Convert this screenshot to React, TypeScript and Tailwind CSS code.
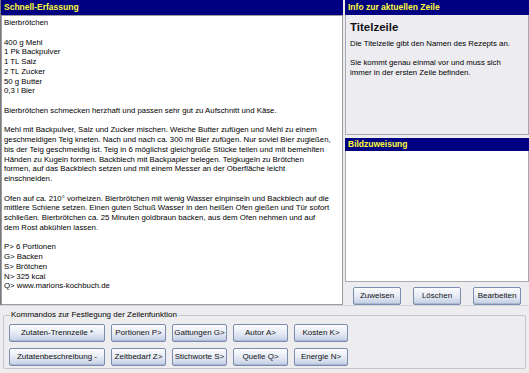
import React from "react";

const recipe = [
  "Bierbrötchen",
  "",
  "400 g Mehl",
  "1 Pk Backpulver",
  "1 TL Salz",
  "2 TL Zucker",
  "50 g Butter",
  "0,3 l Bier",
  "",
  "Bierbrötchen schmecken herzhaft und passen sehr gut zu Aufschnitt und Käse.",
  "",
  "Mehl mit Backpulver, Salz und Zucker mischen. Weiche Butter zufügen und Mehl zu einem",
  "geschmeidigen Teig kneten. Nach und nach ca. 300 ml Bier zufügen. Nur soviel Bier zugießen,",
  "bis der Teig geschmeidig ist. Teig in 6 möglichst gleichgroße Stücke teilen und mit bemehlten",
  "Händen zu Kugeln formen. Backblech mit Backpapier belegen. Teigkugeln zu Brötchen",
  "formen, auf das Backblech setzen und mit einem Messer an der Oberfläche leicht",
  "einschneiden.",
  "",
  "Ofen auf ca. 210° vorheizen. Bierbrötchen mit wenig Wasser einpinseln und Backblech auf die",
  "mittlere Schiene setzen. Einen guten Schuß Wasser in den heißen Ofen gießen und Tür sofort",
  "schließen. Bierbrötchen ca. 25 Minuten goldbraun backen, aus dem Ofen nehmen und auf",
  "dem Rost abkühlen lassen.",
  "",
  "P> 6 Portionen",
  "G> Backen",
  "S> Brötchen",
  "N> 325 kcal",
  "Q> www.marions-kochbuch.de",
];

function XpButton({ label, w }: { label: string; w: string }) {
  return (
    <button
      className={`${w} h-[18px] rounded-[2px] border border-[#7d8db0] bg-gradient-to-b from-[#fbfcfe] via-[#e6ebf5] to-[#c3cee3] text-[8px] leading-none text-[#111] shadow-[inset_0_-1px_0_#aab8d2]`}
    >
      {label}
    </button>
  );
}

function Header({ title, h = "h-[15px]" }: { title: string; h?: string }) {
  return (
    <div
      className={`${h} flex items-center bg-[#000080] pl-[3px] text-[8.5px] font-bold text-[#ffff3c]`}
    >
      {title}
    </div>
  );
}

export default function App() {
  return (
    <div className="flex h-[373px] w-[529px] flex-col overflow-hidden bg-[#ededf0] font-['Liberation_Sans',Arial,sans-serif] text-black">
      <div className="flex h-[306px] border-b border-[#d4d4da]">
        {/* schnell-erfassung */}
        <div className="flex w-[343px] flex-col border-l border-[#7b7b7b]">
          <Header title="Schnell-Erfassung" />
          <div className="flex-1 border border-[#9c9ca4] bg-white pl-[2px] pt-[2px] text-[7.8px] leading-[9.75px]">
            {recipe.map((line, i) => (
              <div key={i} className="h-[9.75px] whitespace-pre">
                {line}
              </div>
            ))}
          </div>
        </div>

        {/* right column */}
        <div className="ml-[2px] flex flex-1 flex-col">
          <Header title="Info zur aktuellen Zeile" />
          <div className="h-[122px] border border-[#a8a8b0] border-t-0 bg-[#ececf1] px-[4px] pt-[5px]">
            <div className="text-[11.5px] font-bold leading-[14px] text-[#111]">
              Titelzeile
            </div>
            <p className="mt-[5px] text-[7.8px] leading-[10px]">
              Die Titelzeile gibt den Namen des Rezepts an.
            </p>
            <p className="mt-[9px] text-[7.8px] leading-[10px]">
              Sie kommt genau einmal vor und muss sich
              <br />
              immer in der ersten Zeile befinden.
            </p>
          </div>
          <div className="mt-[3px]">
            <Header title="Bildzuweisung" h="h-[13px]" />
          </div>
          <div className="h-[133px] border border-[#a8a8b0] border-t-0 bg-white" />
          <div className="flex items-center justify-between px-[8px] pt-[5px]">
            <XpButton label="Zuweisen" w="w-[48px] h-[14px]" />
            <XpButton label="Löschen" w="w-[48px] h-[14px]" />
            <XpButton label="Bearbeiten" w="w-[48px] h-[14px]" />
          </div>
        </div>
      </div>

      {/* kommandos */}
      <div className="relative mx-[3px] mt-[9px] h-[54px] rounded-[2px] border border-[#c5c5cc] pl-[5px] pt-[8px]">
        <span className="absolute left-[6px] top-[-6px] bg-[#ededf0] px-[1px] text-[8px] leading-[10px]">
          Kommandos zur Festlegung der Zeilenfunktion
        </span>
        <div className="flex gap-[6px]">
          <XpButton label="Zutaten-Trennzeile *" w="w-[96px]" />
          <XpButton label="Portionen P>" w="w-[55px]" />
          <XpButton label="Gattungen G>" w="w-[55px]" />
          <XpButton label="Autor A>" w="w-[55px]" />
          <XpButton label="Kosten K>" w="w-[54px]" />
        </div>
        <div className="mt-[6px] flex gap-[6px]">
          <XpButton label="Zutatenbeschreibung -" w="w-[96px]" />
          <XpButton label="Zeitbedarf Z>" w="w-[55px]" />
          <XpButton label="Stichworte S>" w="w-[55px]" />
          <XpButton label="Quelle Q>" w="w-[55px]" />
          <XpButton label="Energie N>" w="w-[54px]" />
        </div>
      </div>
    </div>
  );
}
